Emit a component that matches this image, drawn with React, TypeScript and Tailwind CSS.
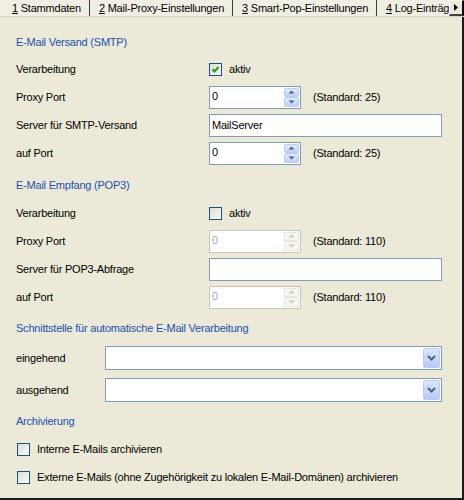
import React from "react";

function Check({ checked }: { checked?: boolean }) {
  return (
    <div className="w-[13px] h-[13px] border border-[#1c5180] bg-gradient-to-br from-[#dcdcd5] to-[#fbfbf9] flex items-center justify-center shrink-0">
      {checked && (
        <svg width="11" height="11" viewBox="0 0 11 11">
          <path d="M2.5 5.2 L4.5 7.4 L8.6 3" stroke="#21a121" strokeWidth="2.2" fill="none" />
        </svg>
      )}
    </div>
  );
}

function SpinBtn({ up, disabled }: { up?: boolean; disabled?: boolean }) {
  return (
    <div
      className={
        disabled
          ? "flex-1 flex items-center justify-center rounded-[2px] border border-[#e8e6dc] bg-[#f7f6f0]"
          : "flex-1 flex items-center justify-center rounded-[2px] border border-[#bccdf3] bg-gradient-to-b from-[#e3ebfd] to-[#bfd0f8]"
      }
    >
      <svg width="7" height="4" viewBox="0 0 7 4">
        {up ? (
          <path d="M0.5 3.5 L3.5 0.5 L6.5 3.5 Z" fill={disabled ? "#c9c7ba" : "#4d6185"} />
        ) : (
          <path d="M0.5 0.5 L3.5 3.5 L6.5 0.5 Z" fill={disabled ? "#c9c7ba" : "#4d6185"} />
        )}
      </svg>
    </div>
  );
}

function Spin({ value, disabled }: { value: string; disabled?: boolean }) {
  return (
    <div
      className={
        disabled
          ? "flex w-[92px] h-[23px] border border-[#c9c7ba] bg-white"
          : "flex w-[92px] h-[23px] border border-[#7f9db9] bg-white"
      }
    >
      <div className={disabled ? "flex-1 pl-[2px] pt-[2px] leading-[14px] text-[#aca899]" : "flex-1 pl-[2px] pt-[2px] leading-[14px] text-black"}>
        {value}
      </div>
      <div className="w-[17px] flex flex-col p-px gap-0">
        <SpinBtn up disabled={disabled} />
        <SpinBtn disabled={disabled} />
      </div>
    </div>
  );
}

function TextBox({ value }: { value?: string }) {
  return (
    <div className="w-[233px] h-[23px] border border-[#7f9db9] bg-white pl-[2px] pt-[3px] leading-[14px]">
      {value}
    </div>
  );
}

function Combo() {
  return (
    <div className="w-[337px] h-[24px] border border-[#7f9db9] bg-white flex justify-end p-px">
      <div className="w-[17px] rounded-[2px] border border-[#bccdf3] bg-gradient-to-b from-[#dbe5fd] to-[#b7c9f7] flex items-center justify-center">
        <svg width="9" height="6" viewBox="0 0 9 6">
          <path d="M1 1 L4.5 4.5 L8 1" stroke="#4d6185" strokeWidth="2" fill="none" />
        </svg>
      </div>
    </div>
  );
}

function Row({ label, children }: { label: string; children: React.ReactNode }) {
  return (
    <div className="h-[28px] flex items-center">
      <div className="w-[193px] shrink-0">{label}</div>
      {children}
    </div>
  );
}

function Tab({ num, text, first }: { num: string; text: string; first?: boolean }) {
  return (
    <div className={first ? "flex items-center h-full pl-[12px] pr-[8px] shrink-0" : "flex items-center h-full pl-[9px] pr-[8px] border-l border-[#404040] shrink-0"}>
      <span className="underline underline-offset-[1px]">{num}</span>
      <span>&nbsp;{text}</span>
    </div>
  );
}

export default function App() {
  return (
    <div className="w-[464px] h-[500px] bg-[#ece9d8] text-black text-[11px] tracking-[-0.22px] font-['Liberation_Sans',Arial,sans-serif] leading-none overflow-hidden relative flex flex-col">
      {/* Tab strip */}
      <div className="h-[17px] flex items-stretch bg-[#f1efe4] border-b border-[#d6d2c2] relative whitespace-nowrap overflow-hidden shrink-0">
        <Tab first num="1" text="Stammdaten" />
        <Tab num="2" text="Mail-Proxy-Einstellungen" />
        <Tab num="3" text="Smart-Pop-Einstellungen" />
        <Tab num="4" text="Log-Einträge" />
        <div className="absolute right-0 top-0 w-[15px] h-[16px] bg-[#ece9d8] border-t border-l border-white border-r-2 border-b-2 border-r-[#000] border-b-[#404040] flex items-center justify-center">
          <svg width="4" height="7" viewBox="0 0 4 7">
            <path d="M0 0 L4 3.5 L0 7 Z" fill="#000" />
          </svg>
        </div>
      </div>

      <div className="flex-1 flex flex-col pl-[16px] border-r-2 border-b-2 border-[#1a1a1a]">
        <div className="h-[38px] pt-[12px] flex items-center text-[#2050b0]">E-Mail Versand (SMTP)</div>
        <Row label="Verarbeitung">
          <Check checked />
          <span className="ml-[7px]">aktiv</span>
        </Row>
        <Row label="Proxy Port">
          <Spin value="0" />
          <span className="ml-[12px]">(Standard: 25)</span>
        </Row>
        <Row label="Server für SMTP-Versand">
          <TextBox value="MailServer" />
        </Row>
        <Row label="auf Port">
          <Spin value="0" />
          <span className="ml-[12px]">(Standard: 25)</span>
        </Row>

        <div className="h-[32px] pt-[4px] flex items-center text-[#2050b0]">E-Mail Empfang (POP3)</div>
        <Row label="Verarbeitung">
          <Check />
          <span className="ml-[7px]">aktiv</span>
        </Row>
        <Row label="Proxy Port">
          <Spin value="0" disabled />
          <span className="ml-[12px]">(Standard: 110)</span>
        </Row>
        <Row label="Server für POP3-Abfrage">
          <TextBox />
        </Row>
        <Row label="auf Port">
          <Spin value="0" disabled />
          <span className="ml-[12px]">(Standard: 110)</span>
        </Row>

        <div className="h-[31px] pt-[4px] flex items-center text-[#2050b0]">Schnittstelle für automatische E-Mail Verarbeitung</div>
        <div className="h-[32px] flex items-center">
          <div className="w-[89px] shrink-0">eingehend</div>
          <Combo />
        </div>
        <div className="h-[32px] flex items-center">
          <div className="w-[89px] shrink-0">ausgehend</div>
          <Combo />
        </div>

        <div className="h-[29px] pt-[1px] flex items-center text-[#2050b0]">Archivierung</div>
        <div className="h-[28px] flex items-center pl-px">
          <Check />
          <span className="ml-[7px]">Interne E-Mails archivieren</span>
        </div>
        <div className="h-[28px] flex items-center pl-px">
          <Check />
          <span className="ml-[7px]">Externe E-Mails (ohne Zugehörigkeit zu lokalen E-Mail-Domänen) archivieren</span>
        </div>
      </div>
    </div>
  );
}
